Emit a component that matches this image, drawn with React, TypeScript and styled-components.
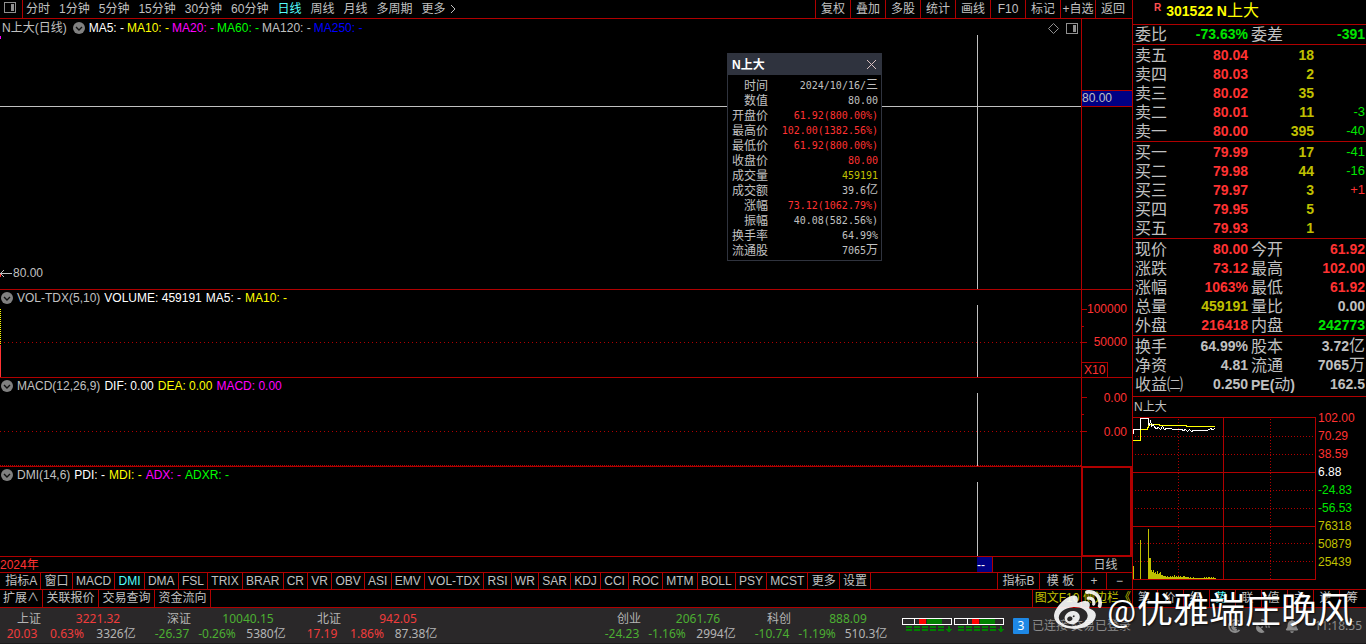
import React from "react";
import styled, { createGlobalStyle } from "styled-components";
import { FaWeibo, FaBell, FaSatelliteDish } from "react-icons/fa";

const C = {
  line: "#b00000",
  text: "#c0c0c0",
  red: "#ff3232",
  green: "#00e600",
  lime: "#00ff00",
  olive: "#c0c000",
  yellow: "#ffff00",
  magenta: "#ff00ff",
  cyan: "#54fcfc",
  white: "#ffffff",
  blue: "#0000ff",
  navy: "#000084",
};

const GlobalStyle = createGlobalStyle`
  * { box-sizing: border-box; }
  html, body { margin: 0; background: #000; }
  body {
    font-family: "Liberation Sans", "Noto Sans CJK SC", sans-serif;
    font-size: 12px;
    line-height: 16px;
    color: ${C.text};
  }
  button { appearance: none; border: 0; background: none; padding: 0; margin: 0; font: inherit; color: inherit; white-space: nowrap; cursor: pointer; }
  svg { display: block; flex: none; }
`;

const Page = styled.div`
  position: relative;
  display: flex;
  flex-direction: column;
  min-height: 100vh;
  min-width: 1240px;
  overflow: hidden;
`;

const Workspace = styled.div`
  flex: 1;
  display: grid;
  grid-template-columns: minmax(0, 1fr) 234px;
`;

const Charts = styled.main`
  display: flex;
  flex-direction: column;
  min-width: 0;
`;

const Toolbar = styled.header`
  display: flex;
  height: 19px;
  border-bottom: 1px solid ${C.line};
  line-height: 16px;
`;

const LayoutToggle = styled.button`
  display: flex;
  justify-content: center;
  align-items: flex-start;
  width: 23px;
  padding: 2px 3px 0 0;
  border-right: 1px solid ${C.line};
`;

const Periods = styled.nav`
  display: flex;
  gap: 9px;
  padding-left: 3px;
`;

const Period = styled.button<{ $active?: boolean }>`
  color: ${(p) => (p.$active ? C.cyan : C.text)};
`;

const More = styled.button`
  display: flex;
  align-items: center;
  gap: 4px;
`;

const Tools = styled.nav`
  display: flex;
  margin-left: auto;
  padding-right: 2px;
`;

const Tool = styled.button`
  width: 35px;
  border-left: 1px solid ${C.line};
  text-align: center;
`;

const Pane = styled.section<{ $height?: number }>`
  display: flex;
  flex: ${(p) => (p.$height ? `0 0 ${p.$height}px` : "1 0 271px")};
  border-bottom: 1px solid ${C.line};
`;

const Plot = styled.div`
  position: relative;
  flex: 1;
  min-width: 0;
`;

const Fold = styled.button`
  padding: 0 0 0 1px;
`;

const Legend = styled.div<{ $main?: boolean }>`
  display: flex;
  align-items: center;
  gap: ${(p) => (p.$main ? 3 : 4)}px;
  height: ${(p) => (p.$main ? 18 : 16)}px;
  padding-left: ${(p) => (p.$main ? 2 : 0)}px;
  white-space: pre;
  ${Fold} {
    padding-left: ${(p) => (p.$main ? 3 : 1)}px;
    padding-right: ${(p) => (p.$main ? 1 : 0)}px;
  }
`;

const LegendItem = styled.span<{ $color?: string }>`
  color: ${(p) => p.$color || C.text};
`;

const ChartActions = styled.div`
  position: absolute;
  top: 4px;
  right: 3px;
  display: flex;
  align-items: center;
  gap: 7px;
`;

const CrossV = styled.div<{ $top: number }>`
  position: absolute;
  top: ${(p) => p.$top}px;
  bottom: 0;
  right: 103px;
  width: 1px;
  background: ${C.text};
`;

const CrossH = styled.div`
  position: absolute;
  top: 87px;
  left: 0;
  right: 0;
  height: 1px;
  background: ${C.text};
`;

const DotRow = styled.div<{ $top: number; $tight?: boolean }>`
  position: absolute;
  top: ${(p) => p.$top}px;
  left: 0;
  right: 0;
  height: 1px;
  background: repeating-linear-gradient(
    to right,
    ${C.line} 0 1px,
    transparent 1px ${(p) => (p.$tight ? 2 : 4)}px
  );
`;

const LowMark = styled.div`
  position: absolute;
  left: 0;
  bottom: 8px;
  display: flex;
  align-items: center;
  gap: 1px;
`;

const EdgeMark = styled.div<{ $top: number; $height: number; $color: string }>`
  position: absolute;
  left: 0;
  top: ${(p) => p.$top}px;
  width: 1px;
  height: ${(p) => p.$height}px;
  background: ${(p) => p.$color};
`;

const Axis = styled.div<{ $boxed?: boolean }>`
  position: relative;
  width: 51px;
  border-left: 1px solid ${C.line};
  ${(p) =>
    p.$boxed &&
    `border: 2px solid ${C.line}; border-bottom-width: 1px; border-top-width: 1px;`}
`;

const AxisLabels = styled.div<{ $pitch: number }>`
  display: flex;
  flex-direction: column;
  padding: 3px 5px 0 0;
  text-align: right;
  color: ${C.red};
  line-height: ${(p) => p.$pitch}px;
`;

const Ticks = styled.svg`
  position: absolute;
  left: 0;
  top: 0;
`;

const Unit = styled.div`
  position: absolute;
  left: 0;
  bottom: 0;
  width: 26px;
  height: 15px;
  padding-left: 2px;
  border: 1px solid ${C.line};
  border-width: 1px 1px 0 0;
  color: ${C.red};
  line-height: 14px;
`;

const PriceTag = styled.div`
  position: absolute;
  top: 71px;
  left: 0;
  right: 0;
  height: 17px;
  border: 1px solid ${C.line};
  border-width: 1px 0;
  background: ${C.navy};
  line-height: 14px;
`;

const DateRow = styled.div`
  display: flex;
  height: 16px;
  border-bottom: 1px solid ${C.line};
  color: ${C.red};
`;

const DateTag = styled.div`
  position: absolute;
  top: 0;
  bottom: 0;
  right: 88px;
  width: 16px;
  border-right: 1px solid ${C.line};
  background: ${C.navy};
  color: ${C.white};
`;

const AxisPeriod = styled.button`
  width: 51px;
  border-left: 1px solid ${C.line};
  padding-right: 3px;
  color: ${C.text};
  line-height: 14px;
`;

const TabRow = styled.nav<{ $height: number }>`
  display: flex;
  height: ${(p) => p.$height}px;
  border-bottom: 1px solid ${C.line};
  line-height: ${(p) => p.$height - 1}px;
`;

const IndicatorTabs = styled.div`
  display: flex;
  flex: 0 1 871px;
`;

const Tab = styled.button<{ $active?: boolean }>`
  flex: 1 1 auto;
  padding: 0 3px;
  border-right: 1px solid ${C.line};
  color: ${(p) => (p.$active ? C.cyan : C.text)};
  &:first-child { padding-left: 5px; }
`;

const ExtTab = styled.button<{ $w: number }>`
  width: ${(p) => p.$w}px;
  border-right: 1px solid ${C.line};
`;

const RightTabs = styled.div`
  display: flex;
  margin-left: auto;
`;

const RightTab = styled.button<{ $w: number; $color?: string }>`
  width: ${(p) => p.$w}px;
  border-left: 1px solid ${C.line};
  color: ${(p) => p.$color || C.text};
`;

const SideTabs = styled.nav`
  display: flex;
  height: 18px;
  border-bottom: 1px solid ${C.line};
  font-size: 12px;
`;

const SideTab = styled.button<{ $active?: boolean }>`
  flex: 1 0 26px;
  padding-right: 2px;
  border-right: 1px solid ${C.line};
  color: ${(p) => (p.$active ? C.cyan : C.text)};
  line-height: 17px;
  &:first-child { flex-basis: 25px; }
  &:last-child { border-right: 0; }
`;

const Side = styled.aside`
  display: flex;
  flex-direction: column;
  min-width: 0;
  border-left: 1px solid ${C.line};
  font-size: 16px;
`;

const StockTitle = styled.h1`
  display: flex;
  gap: 5px;
  height: 25px;
  margin: 0;
  padding-left: 21px;
  border-bottom: 1px solid ${C.line};
  color: ${C.yellow};
  font-size: 14px;
  font-weight: 700;
  line-height: 22px;
`;

const StockFlag = styled.span`
  color: #ff5050;
  font-size: 10px;
  line-height: 15px;
`;

const Thin = styled.span`
  font-size: 16px;
  font-weight: 400;
`;

const Block = styled.div<{ $flush?: boolean; $last?: boolean }>`
  padding: ${(p) => (p.$flush ? 0 : 1)}px 0 ${(p) => (p.$last ? 2 : 0)}px;
  border-bottom: 1px solid ${C.line};
`;

const DataTable = styled.table`
  width: 100%;
  table-layout: fixed;
  border-collapse: collapse;
`;

const LabelCell = styled.th<{ $w: number }>`
  width: ${(p) => p.$w}px;
  height: 19px;
  padding: 0 0 0 2px;
  font-size: 16px;
  font-weight: 400;
  line-height: 16px;
  text-align: left;
  white-space: nowrap;
`;

const NumCell = styled.td<{ $color?: string; $w?: number; $small?: boolean }>`
  width: ${(p) => (p.$w ? `${p.$w}px` : "auto")};
  height: 19px;
  padding: 0 1px 2px 0;
  color: ${(p) => p.$color || C.text};
  font-size: ${(p) => (p.$small ? 13 : 14)}px;
  font-weight: ${(p) => (p.$small ? 400 : 700)};
  line-height: 16px;
  text-align: right;
  white-space: nowrap;
`;

const MiniTitle = styled.h2`
  height: 20px;
  margin: 0;
  padding-left: 1px;
  font-size: 12px;
  font-weight: 400;
  line-height: 20px;
`;

const MiniBody = styled.div`
  flex: 1;
  display: flex;
  align-items: flex-start;
  border-bottom: 1px solid ${C.line};
`;

const MiniLabels = styled.div`
  margin-top: -8px;
  padding-left: 2px;
  font-size: 12px;
  line-height: 18px;
`;

const MiniLabel = styled.div<{ $color: string }>`
  color: ${(p) => p.$color};
`;

const Popup = styled.section`
  position: absolute;
  top: 53px;
  left: 727px;
  width: 155px;
  border: 1px solid #2f333e;
  background: #000;
  z-index: 3;
`;

const PopupHead = styled.div`
  display: flex;
  justify-content: space-between;
  align-items: center;
  height: 21px;
  padding: 0 4px;
  background: #2f333e;
  color: ${C.white};
  font-weight: 700;
`;

const PopupTable = styled.table`
  width: 100%;
  margin: 3px 0 2px;
  border-collapse: collapse;
`;

const PopupLabel = styled.th`
  width: 40px;
  height: 15px;
  padding: 0;
  font-weight: 400;
  line-height: 14px;
  text-align: right;
`;

const PopupValue = styled.td<{ $color?: string }>`
  height: 15px;
  padding: 0 3px 0 0;
  color: ${(p) => p.$color || C.text};
  font-family: "DejaVu Sans Mono", "Noto Sans CJK SC", monospace;
  font-size: 10px;
  line-height: 14px;
  text-align: right;
  white-space: nowrap;
`;

const PopupCjk = styled.span`
  font-size: 12px;
`;

const StatusBar = styled.footer`
  display: flex;
  align-items: center;
  height: 36px;
  background: #2a2829;
  border-bottom: 1px solid #1c1b1c;
  font-family: "Noto Sans", "Noto Sans CJK SC", sans-serif;
  color: #b4b4b4;
`;

const IndexSlot = styled.div`
  flex: 0 0 150px;
  padding-top: 1px;
  line-height: 15px;
  text-align: center;
  white-space: nowrap;
`;

const IndexTop = styled.div`
  display: grid;
  grid-template-columns: 58px 80px;
`;

const IndexBottom = styled.div`
  display: grid;
  grid-template-columns: 44px 46px 52px;
`;

const Tone = styled.span<{ $up: boolean }>`
  color: ${(p) => (p.$up ? "#f03c3c" : "#4caf32")};
`;

const Meters = styled.div`
  display: flex;
  gap: 2px;
  margin-left: 2px;
`;

const Connection = styled.div`
  display: flex;
  align-items: center;
  gap: 3px;
  margin-left: 9px;
  color: #8c8c8c;
  white-space: nowrap;
`;

const Badge = styled.span`
  width: 16px;
  border-radius: 1px;
  background: #1e88e5;
  color: ${C.white};
  line-height: 16px;
  text-align: center;
`;

const Tray = styled.div`
  display: flex;
  align-items: center;
  gap: 15px;
  margin-left: auto;
  padding-right: 4px;
  color: #8c8c8c;
`;

const Watermark = styled.div`
  position: absolute;
  right: 13px;
  bottom: 9px;
  display: flex;
  align-items: center;
  gap: 5px;
  color: ${C.white};
  font-family: Roboto, "Noto Sans CJK SC", sans-serif;
  font-size: 36px;
  line-height: 42px;
  text-shadow: 1px 1px 2px rgba(0, 0, 0, 0.7);
  white-space: nowrap;
  pointer-events: none;
  z-index: 5;
`;

const WatermarkAt = styled.span`
  font-size: 32px;
`;

const WatermarkText = styled.span`
  display: flex;
  align-items: center;
  gap: 1px;
`;

function PanelIcon() {
  return (
    <svg width="12" height="11" viewBox="0 0 12 11" shapeRendering="crispEdges">
      <rect x="0.5" y="0.5" width="11" height="10" fill="none" stroke="#909090" />
      <rect x="7" y="2" width="3" height="7" fill="#909090" />
    </svg>
  );
}

function FoldIcon() {
  return (
    <svg width="12" height="12" viewBox="0 0 12 12">
      <circle cx="6" cy="6" r="6" fill="#808080" />
      <path d="M3 5l3 3 3-3" fill="none" stroke="#101010" strokeWidth="1.4" />
    </svg>
  );
}

type LegendEntry = [string, string?];

function SubLegend({ items }: { items: LegendEntry[] }) {
  return (
    <Legend>
      <Fold aria-label="折叠"><FoldIcon /></Fold>
      {items.map(([t, c]) => <LegendItem key={t} $color={c}>{t}</LegendItem>)}
    </Legend>
  );
}

const periods = ["分时", "1分钟", "5分钟", "15分钟", "30分钟", "60分钟", "日线", "周线", "月线", "多周期"];
const tools = ["复权", "叠加", "多股", "统计", "画线", "F10", "标记", "+自选", "返回"];
const indicators = ["指标A", "窗口", "MACD", "DMI", "DMA", "FSL", "TRIX", "BRAR", "CR", "VR", "OBV", "ASI", "EMV", "VOL-TDX", "RSI", "WR", "SAR", "KDJ", "CCI", "ROC", "MTM", "BOLL", "PSY", "MCST", "更多", "设置"];
const sideTabs = ["笔", "价", "细", "势", "联", "值", "主", "逆", "筹"];

const mainLegend: LegendEntry[] = [
  ["MA5: -", C.white], ["MA10: -", C.yellow], ["MA20: -", C.magenta],
  ["MA60: -", C.lime], ["MA120: -", C.text], ["MA250: -", C.blue],
];

const popupRows: [string, string, string?, string?][] = [
  ["时间", "2024/10/16/", "三"],
  ["数值", "80.00"],
  ["开盘价", "61.92(800.00%)", "", C.red],
  ["最高价", "102.00(1382.56%)", "", C.red],
  ["最低价", "61.92(800.00%)", "", C.red],
  ["收盘价", "80.00", "", C.red],
  ["成交量", "459191", "", C.olive],
  ["成交额", "39.6", "亿"],
  ["涨幅", "73.12(1062.79%)", "", C.red],
  ["振幅", "40.08(582.56%)"],
  ["换手率", "64.99%"],
  ["流通股", "7065", "万"],
];

const sells = [
  ["卖五", "80.04", "18", ""], ["卖四", "80.03", "2", ""], ["卖三", "80.02", "35", ""],
  ["卖二", "80.01", "11", "-3"], ["卖一", "80.00", "395", "-40"],
];
const buys = [
  ["买一", "79.99", "17", "-41"], ["买二", "79.98", "44", "-16"], ["买三", "79.97", "3", "+1"],
  ["买四", "79.95", "5", ""], ["买五", "79.93", "1", ""],
];

type Stat = [React.ReactNode, string, string, React.ReactNode, React.ReactNode, string];
const ratio: Stat[] = [["委比", "-73.63%", C.green, "委差", "-391", C.green]];
const prices: Stat[] = [
  ["现价", "80.00", C.red, "今开", "61.92", C.red],
  ["涨跌", "73.12", C.red, "最高", "102.00", C.red],
  ["涨幅", "1063%", C.red, "最低", "61.92", C.red],
  ["总量", "459191", C.olive, "量比", "0.00", C.text],
  ["外盘", "216418", C.red, "内盘", "242773", C.green],
];
const Pe = styled.b`
  font-size: 14px;
`;
const basics: Stat[] = [
  ["换手", "64.99%", C.text, "股本", <>3.72<Thin>亿</Thin></>, C.text],
  ["净资", "4.81", C.text, "流通", <>7065<Thin>万</Thin></>, C.text],
  ["收益㈡", "0.250", C.text, <><Pe>PE(</Pe>动<Pe>)</Pe></>, "162.5", C.text],
];

function BookTable({ rows }: { rows: string[][] }) {
  return (
    <DataTable>
      <tbody>
        {rows.map(([label, price, vol, diff]) => (
          <tr key={label}>
            <LabelCell scope="row" $w={50}>{label}</LabelCell>
            <NumCell $w={66} $color={C.red}>{price}</NumCell>
            <NumCell $w={66} $color={C.olive}>{vol}</NumCell>
            <NumCell $small $color={diff.startsWith("+") ? C.red : C.green}>{diff}</NumCell>
          </tr>
        ))}
      </tbody>
    </DataTable>
  );
}

function StatTable({ rows }: { rows: Stat[] }) {
  return (
    <DataTable>
      <tbody>
        {rows.map(([l1, v1, c1, l2, v2, c2]) => (
          <tr key={String(l1)}>
            <LabelCell scope="row" $w={50}>{l1}</LabelCell>
            <NumCell $w={66} $color={c1}>{v1}</NumCell>
            <LabelCell scope="row" $w={50}>{l2}</LabelCell>
            <NumCell $color={c2}>{v2}</NumCell>
          </tr>
        ))}
      </tbody>
    </DataTable>
  );
}

const miniLabels: [string, string][] = [
  ["102.00", C.red], ["70.29", C.red], ["38.59", C.red], ["6.88", C.white],
  ["-24.83", C.green], ["-56.53", C.green], ["76318", C.olive], ["50879", C.olive], ["25439", C.olive],
];

const volumes = [
  [0, 13], [7, 39], [15, 50], [16, 21], [17, 21], [18, 9], [19, 7], [20, 9], [21, 6], [22, 7], [23, 5],
  [24, 8], [25, 5], [26, 6], [27, 7], [28, 4], [29, 4], [30, 3], [31, 3], [32, 3], [33, 2], [34, 3], [35, 2],
  [36, 2], [37, 3], [38, 2], [39, 3], [40, 2], [41, 4], [42, 2], [43, 3], [44, 2], [45, 3], [46, 2], [47, 3],
  [48, 2], [49, 2], [50, 3], [51, 3], [52, 2], [53, 2], [54, 2], [55, 2], [56, 1], [57, 2], [58, 1], [59, 1],
  [60, 2], [61, 1], [62, 1], [63, 1], [64, 1], [65, 1], [66, 1], [67, 1], [68, 1], [69, 1], [70, 1], [71, 2],
  [72, 1], [73, 2], [74, 1], [75, 2], [76, 2], [77, 1], [78, 2], [79, 1], [80, 2], [81, 1], [82, 1],
];

function MiniChart() {
  return (
    <svg width="183" height="163" viewBox="0 0 183 163" shapeRendering="crispEdges" role="img" aria-label="N上大 分时走势">
      <g stroke={C.line} fill="none">
        <path d="M0 .5H183M0 55.5H183M0 109.5H183M0 162.5H183M90.5 0V163M182.5 0V163" />
        <path d="M2 19.5H182M2 37.5H182M2 73.5H182M2 91.5H182M2 126.5H182M2 144.5H182M45.5 2V162M137.5 2V162" strokeDasharray="1 2" />
      </g>
      <g fill={C.olive}>
        {volumes.map(([x, h]) => <rect key={x} x={x} y={162 - h} width="1" height={h} />)}
      </g>
      <path d="M0 23.5H7.5V12.5H14.5V10.5H15.5V7.5H26.5V8.5H53.5V9.5H82" fill="none" stroke={C.yellow} />
      <path d="M.5 17V12.5H7.5V1.5H15.5V6L16.5 9L17.5 3L18.5 9L20.5 8L21.5 10.5L23.5 11.5L25.5 10.5L27.5 12.5L29.5 9.5L31.5 12.5L33.5 11.5H38L39.5 12.5H48.5L50.5 13.5L52.5 12.5L54.5 14.5L56.5 12.5L58.5 14.5L60.5 13.5H74.5L77.5 11.5L79.5 12.5L82 11.5" fill="none" stroke={C.white} />
    </svg>
  );
}

type Index = { name: string; value: string; diff: string; pct: string; amount: string; up: boolean } | null;
const indexes: Index[] = [
  { name: "上证", value: "3221.32", diff: "20.03", pct: "0.63%", amount: "3326亿", up: true },
  { name: "深证", value: "10040.15", diff: "-26.37", pct: "-0.26%", amount: "5380亿", up: false },
  { name: "北证", value: "942.05", diff: "17.19", pct: "1.86%", amount: "87.38亿", up: true },
  null,
  { name: "创业", value: "2061.76", diff: "-24.23", pct: "-1.16%", amount: "2994亿", up: false },
  { name: "科创", value: "888.09", diff: "-10.74", pct: "-1.19%", amount: "510.3亿", up: false },
];

function Meter({ offset }: { offset: number }) {
  return (
    <svg width="50" height="15" viewBox="0 0 50 15" shapeRendering="crispEdges">
      <rect x="0.5" y="0.5" width="49" height="6" fill="none" stroke="#fff" />
      <rect x={12 + offset} y="0" width="1" height="7" fill="#fff" />
      <rect x={17 + offset} y="1" width="7" height="5" fill="#ff0000" />
      <rect x={25 + offset} y="1" width="15" height="5" fill="#008000" />
      {[4, 12, 20, 28, 36].map((x) => (
        <path key={x} d={`M${x} 9h6M${x} 12h6`} stroke="#008000" strokeWidth="2" />
      ))}
      <path d="M46 8h2v3h2v1h-1v1h-1v1h-2v-1h-1v-1h-1v-1h2z" fill="#008000" />
    </svg>
  );
}

export default function App() {
  return (
    <Page>
      <GlobalStyle />
      <Workspace>
        <Charts>
          <Toolbar>
            <LayoutToggle aria-label="布局"><PanelIcon /></LayoutToggle>
            <Periods>
              {periods.map((p) => <Period key={p} $active={p === "日线"}>{p}</Period>)}
              <More>
                更多
                <svg width="7" height="10" viewBox="0 0 7 10"><path d="M1 1l4 4-4 4" fill="none" stroke={C.text} /></svg>
              </More>
            </Periods>
            <Tools>{tools.map((t) => <Tool key={t}>{t}</Tool>)}</Tools>
          </Toolbar>

          <Pane>
            <Plot>
              <Legend $main>
                <LegendItem>N上大(日线)</LegendItem>
                <Fold aria-label="折叠"><FoldIcon /></Fold>
                {mainLegend.map(([t, c]) => <LegendItem key={t} $color={c}>{t}</LegendItem>)}
              </Legend>
              <ChartActions>
                <button aria-label="标记">
                  <svg width="11" height="11" viewBox="0 0 11 11"><path d="M5.5 .5l5 5-5 5-5-5z" fill="none" stroke="#909090" /></svg>
                </button>
                <button aria-label="侧栏"><PanelIcon /></button>
              </ChartActions>
              <EdgeMark $top={17} $height={3} $color={C.magenta} />
              <CrossH />
              <CrossV $top={16} />
              <LowMark>
                <svg width="12" height="9" viewBox="0 0 12 9" shapeRendering="crispEdges">
                  <path d="M0 4.5h12M4 1l-3 3.5 3 3.5" fill="none" stroke={C.text} />
                  <path d="M0 5h1v3h-1z" fill={C.red} />
                </svg>
                80.00
              </LowMark>
            </Plot>
            <Axis><PriceTag>80.00</PriceTag></Axis>
          </Pane>

          <Pane $height={88}>
            <Plot>
              <SubLegend items={[["VOL-TDX(5,10)"], ["VOLUME: 459191", C.white], ["MA5: -", C.white], ["MA10: -", C.yellow]]} />
              <DotRow $top={52} />
              <EdgeMark $top={19} $height={36} $color={`repeating-linear-gradient(${C.yellow} 0 1px, transparent 1px 2px)`} />
              <EdgeMark $top={55} $height={32} $color={C.red} />
              <CrossV $top={15} />
            </Plot>
            <Axis>
              <Ticks width="6" height="87" shapeRendering="crispEdges"><path d="M0 19.5h5M0 36.5h2M0 52.5h5" stroke={C.line} /></Ticks>
              <AxisLabels $pitch={33}><span>100000</span><span>50000</span></AxisLabels>
              <Unit>X10</Unit>
            </Axis>
          </Pane>

          <Pane $height={89}>
            <Plot>
              <SubLegend items={[["MACD(12,26,9)"], ["DIF: 0.00", C.white], ["DEA: 0.00", C.yellow], ["MACD: 0.00", C.magenta]]} />
              <DotRow $top={53} />
              <DotRow $top={87} $tight />
              <CrossV $top={15} />
            </Plot>
            <Axis>
              <Ticks width="6" height="87" shapeRendering="crispEdges"><path d="M0 19.5h5M0 36.5h2M0 53.5h5" stroke={C.line} /></Ticks>
              <AxisLabels $pitch={34}><span>0.00</span><span>0.00</span></AxisLabels>
            </Axis>
          </Pane>

          <Pane $height={90}>
            <Plot>
              <SubLegend items={[["DMI(14,6)"], ["PDI: -", C.white], ["MDI: -", C.yellow], ["ADX: -", C.magenta], ["ADXR: -", C.lime]]} />
              <CrossV $top={15} />
            </Plot>
            <Axis $boxed />
          </Pane>

          <DateRow>
            <Plot>2024年<DateTag>--</DateTag></Plot>
            <AxisPeriod>日线</AxisPeriod>
          </DateRow>

          <TabRow $height={17}>
            <IndicatorTabs>
              {indicators.map((t) => <Tab key={t} $active={t === "DMI"}>{t}</Tab>)}
            </IndicatorTabs>
            <RightTabs>
              <RightTab $w={42}>指标B</RightTab>
              <RightTab $w={42}>模 板</RightTab>
              <RightTab $w={25}>+</RightTab>
              <RightTab $w={26}>−</RightTab>
            </RightTabs>
          </TabRow>

          <TabRow $height={18}>
            <ExtTab $w={43}>扩展∧</ExtTab>
            <ExtTab $w={56}>关联报价</ExtTab>
            <ExtTab $w={56}>交易查询</ExtTab>
            <ExtTab $w={56}>资金流向</ExtTab>
            <RightTabs>
              <RightTab $w={49} $color={C.olive}>图文F10</RightTab>
              <RightTab $w={51} $color={C.olive}>侧边栏《</RightTab>
            </RightTabs>
          </TabRow>
        </Charts>

        <Side>
          <StockTitle>
            <StockFlag>R</StockFlag>
            <span>301522 N<Thin>上大</Thin></span>
          </StockTitle>
          <Block $flush><StatTable rows={ratio} /></Block>
          <Block><BookTable rows={sells} /></Block>
          <Block><BookTable rows={buys} /></Block>
          <Block><StatTable rows={prices} /></Block>
          <Block $last><StatTable rows={basics} /></Block>
          <MiniTitle>N上大</MiniTitle>
          <MiniBody>
            <MiniChart />
            <MiniLabels>
              {miniLabels.map(([t, c]) => <MiniLabel key={t} $color={c}>{t}</MiniLabel>)}
            </MiniLabels>
          </MiniBody>
          <SideTabs>
            {sideTabs.map((t) => <SideTab key={t} $active={t === "势"}>{t}</SideTab>)}
          </SideTabs>
        </Side>
      </Workspace>

      <StatusBar>
        {indexes.map((ix, i) => (
          <IndexSlot key={i}>
            {ix && (
              <>
                <IndexTop><span>{ix.name}</span><Tone $up={ix.up}>{ix.value}</Tone></IndexTop>
                <IndexBottom>
                  <Tone $up={ix.up}>{ix.diff}</Tone>
                  <Tone $up={ix.up}>{ix.pct}</Tone>
                  <span>{ix.amount}</span>
                </IndexBottom>
              </>
            )}
          </IndexSlot>
        ))}
        <Meters><Meter offset={0} /><Meter offset={1} /></Meters>
        <Connection><Badge>3</Badge>已连接 交易已登录</Connection>
        <Tray>
          <svg width="14" height="14" viewBox="0 0 14 14">
            <path d="M12 2.5A6 6 0 1 0 12.5 11M10.5 4.5A3.5 3.5 0 1 0 10 10.5M8 6a1.5 1.5 0 1 0 1 2" fill="none" stroke="#8c8c8c" strokeWidth="1.8" />
          </svg>
          <FaSatelliteDish size={14} />
          <FaBell size={14} />
          <span>11:18:55</span>
        </Tray>
      </StatusBar>

      <Popup aria-label="N上大">
        <PopupHead>
          N上大
          <button aria-label="关闭">
            <svg width="11" height="11" viewBox="0 0 11 11"><path d="M1 1l9 9M10 1l-9 9" stroke="#d8c0c0" /></svg>
          </button>
        </PopupHead>
        <PopupTable>
          <tbody>
            {popupRows.map(([label, value, unit, color]) => (
              <tr key={label}>
                <PopupLabel scope="row">{label}</PopupLabel>
                <PopupValue $color={color}>{value}{unit && <PopupCjk>{unit}</PopupCjk>}</PopupValue>
              </tr>
            ))}
          </tbody>
        </PopupTable>
      </Popup>

      <Watermark>
        <FaWeibo size={48} opacity={0.9} />
        <WatermarkText><WatermarkAt>@</WatermarkAt>优雅端庄晚风</WatermarkText>
      </Watermark>
    </Page>
  );
}
